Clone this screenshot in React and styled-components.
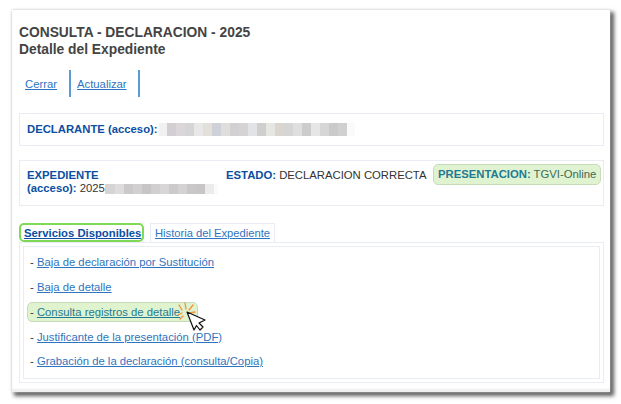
import React from "react";
import styled, { createGlobalStyle } from "styled-components";

const GlobalStyle = createGlobalStyle`
  html, body {
    margin: 0;
    padding: 0;
    background: #fff;
    font-family: "Liberation Sans", Arial, sans-serif;
  }
`;

const Page = styled.div`
  width: 621px;
  height: 404px;
  padding: 10px 11px 12px 12px;
  box-sizing: border-box;
  overflow: hidden;
`;

const Card = styled.div`
  height: 382px;
  box-sizing: border-box;
  padding: 14px 7px 0 7px;
  background: #fff;
  box-shadow: 0 0 2px #cfcfcf, 3px 3px 4px 1px #5e5e5e, inset 0 -3px 2px #efefef;
`;

const Title = styled.h1`
  margin: 0;
  font-size: 13.8px;
  line-height: 17px;
  font-weight: bold;
  color: #444;
`;

const Toolbar = styled.div`
  display: flex;
  margin: 12px 0 0 0;
  height: 27px;
`;

const ToolLink = styled.a`
  display: flex;
  align-items: center;
  padding: 0 ${(p) => p.$right}px 0 6px;
  border-right: 2px solid #5b9bd5;
  font-size: 11.3px;
  color: #2f74c0;
  text-decoration: underline;
`;

const InfoBox = styled.div`
  margin-top: ${(p) => p.$top}px;
  height: ${(p) => p.$height}px;
  width: 585px;
  box-sizing: border-box;
  border: 1px solid #e9edf3;
  padding: ${(p) => p.$pad};
  font-size: 11.3px;
  line-height: 13px;
  color: #333;
`;

const Row = styled.div`
  display: flex;
  align-items: center;
  height: 100%;
`;

const Label = styled.span`
  font-weight: bold;
  color: #0b4ea2;
`;

const BlurStrip = styled.span`
  display: inline-flex;
  height: ${(p) => p.$h}px;
  vertical-align: middle;
`;

const BlurCell = styled.span`
  width: ${(p) => p.$w}px;
  height: 100%;
  background: ${(p) => p.$c};
`;

const ExpedienteGrid = styled.div`
  display: grid;
  grid-template-columns: 199px 207px 168px;
  align-items: start;
`;

const Estado = styled.div`
  white-space: nowrap;
`;

const Presentacion = styled.div`
  box-sizing: border-box;
  margin-top: -5px;
  height: 21px;
  padding: 3px 0 0 4px;
  background: #e0f3d0;
  border: 1px solid #c6dcb8;
  border-radius: 5px;
  white-space: nowrap;
  color: #3d6b55;
`;

const PresLabel = styled.span`
  font-weight: bold;
  color: #1f7a94;
`;

const Tabs = styled.div`
  display: flex;
  align-items: flex-end;
  margin-top: 17px;
  height: 19px;
  gap: 6px;
`;

const ActiveTab = styled.a`
  box-sizing: border-box;
  width: 125px;
  height: 19px;
  padding: 2px 0 0 3px;
  border: 2px solid #7ed957;
  border-radius: 5px;
  font-size: 11.3px;
  font-weight: bold;
  color: #0b4ea2;
  text-decoration: underline;
  white-space: nowrap;
`;

const Tab = styled.a`
  box-sizing: border-box;
  height: 19px;
  padding: 3px 4px 0 4px;
  border: 1px solid #e9edf3;
  border-bottom: 0;
  font-size: 11.2px;
  color: #2f74c0;
  text-decoration: underline;
`;

const Panel = styled.div`
  width: 585px;
  height: 141px;
  box-sizing: border-box;
  padding: 3px;
  border: 1px solid #e9edf3;
`;

const PanelInner = styled.ul`
  height: 100%;
  box-sizing: border-box;
  margin: 0;
  padding: 6px 3px 0 3px;
  list-style: none;
  border: 1px solid #e9edf3;
  display: flex;
  flex-direction: column;
  gap: 5.5px;
`;

const Item = styled.li`
  height: 19px;
  line-height: 19px;
  font-size: 11.3px;
  color: #333;
  padding-left: 3px;
  white-space: nowrap;
  box-sizing: border-box;
  position: relative;
`;

const HighlightItem = styled(Item)`
  width: 171px;
  height: 20px;
  line-height: 18px;
  padding-left: 2px;
  background: #dff3cf;
  border: 1px solid #c6dcb8;
  border-radius: 5px;
`;

const ItemLink = styled.a`
  color: ${(p) => p.$color || "#2f74c0"};
  text-decoration: underline;
`;

const Cursor = styled.svg`
  position: absolute;
  left: 142px;
  top: -3px;
`;

const declaranteBlur = [
  [1, "#fbfbfb"], [8, "#f1f1f1"], [9, "#d2ced2"], [9, "#dbd6d9"], [9, "#d6d5d5"], [9, "#e8e8e8"], [9, "#e3dfda"], [9, "#ced2d8"], [9, "#dfdedd"], [9, "#d2d0d2"], [9, "#d5d3d3"],
  [9, "#e2e3e7"], [9, "#d1cfce"], [9, "#e6e6e3"], [9, "#dad6cf"], [9, "#d5d5d5"], [9, "#dfdfdf"], [9, "#cccccc"], [9, "#e6e6e6"], [9, "#d6d6d6"], [9, "#cacaca"], [9, "#d0d0d0"], [8, "#fafafa"],
];

const expedienteBlur = [
  [10, "#d6d4d5"], [9, "#dedcdd"], [9, "#cbc9ca"], [9, "#d2d0d1"], [9, "#c7c5c6"], [9, "#d1cfd0"], [9, "#d8d6d7"], [9, "#cccacb"], [9, "#d4d2d3"], [9, "#c9c7c8"], [9, "#c7c5c5"], [9, "#ebebeb"], [4, "#fafafa"],
];

const links = [
  { text: "Baja de declaración por Sustitución" },
  { text: "Baja de detalle" },
  { text: "Consulta registros de detalle", hot: true },
  { text: "Justificante de la presentación (PDF)" },
  { text: "Grabación de la declaración (consulta/Copia)" },
];

const Blur = ({ cells, h }) => (
  <BlurStrip $h={h}>
    {cells.map(([w, c], i) => (
      <BlurCell key={i} $w={w} $c={c} />
    ))}
  </BlurStrip>
);

const ClickCursor = () => (
  <Cursor width="40" height="34" viewBox="0 0 40 34">
    <g stroke="#f5923a" strokeWidth="1.3" strokeLinecap="round">
      <path d="M9 5 L12 10" />
      <path d="M15 3 L16 9" />
      <path d="M23 5 L19 10" />
      <path d="M25 12 L19 13" />
      <path d="M8 15 L12 13" />
      <path d="M10 19 L13 16" />
    </g>
    <path
      d="M17 12 L35 20 L29 23 L33 27 L30 30 L26.5 25.5 L24 30 Z"
      fill="#fff"
      stroke="#111"
      strokeWidth="1.2"
      strokeLinejoin="round"
    />
  </Cursor>
);

export default function App() {
  return (
    <Page>
      <GlobalStyle />
      <Card>
        <Title>
          CONSULTA - DECLARACION - 2025
          <br />
          Detalle del Expediente
        </Title>
        <Toolbar>
          <ToolLink $right={12}>Cerrar</ToolLink>
          <ToolLink $right={11}>Actualizar</ToolLink>
        </Toolbar>
        <InfoBox $top={16} $height={33} $pad="0 7px">
          <Row>
            <Label>DECLARANTE (acceso):</Label>
            <Blur cells={declaranteBlur} h={13} />
          </Row>
        </InfoBox>
        <InfoBox $top={14} $height={46} $pad="8px 7px 0 7px">
          <ExpedienteGrid>
            <div>
              <Label>EXPEDIENTE</Label>
              <br />
              <Label>(acceso):</Label> 2025
              <Blur cells={expedienteBlur} h={10} />
            </div>
            <Estado>
              <Label>ESTADO:</Label> DECLARACION CORRECTA
            </Estado>
            <Presentacion>
              <PresLabel>PRESENTACION:</PresLabel> TGVI-Online
            </Presentacion>
          </ExpedienteGrid>
        </InfoBox>
        <Tabs>
          <ActiveTab>Servicios Disponibles</ActiveTab>
          <Tab>Historia del Expediente</Tab>
        </Tabs>
        <Panel>
          <PanelInner>
            {links.map((l) =>
              l.hot ? (
                <HighlightItem key={l.text}>
                  - <ItemLink $color="#1f7a94">{l.text}</ItemLink>
                  <ClickCursor />
                </HighlightItem>
              ) : (
                <Item key={l.text}>
                  - <ItemLink>{l.text}</ItemLink>
                </Item>
              )
            )}
          </PanelInner>
        </Panel>
      </Card>
    </Page>
  );
}
